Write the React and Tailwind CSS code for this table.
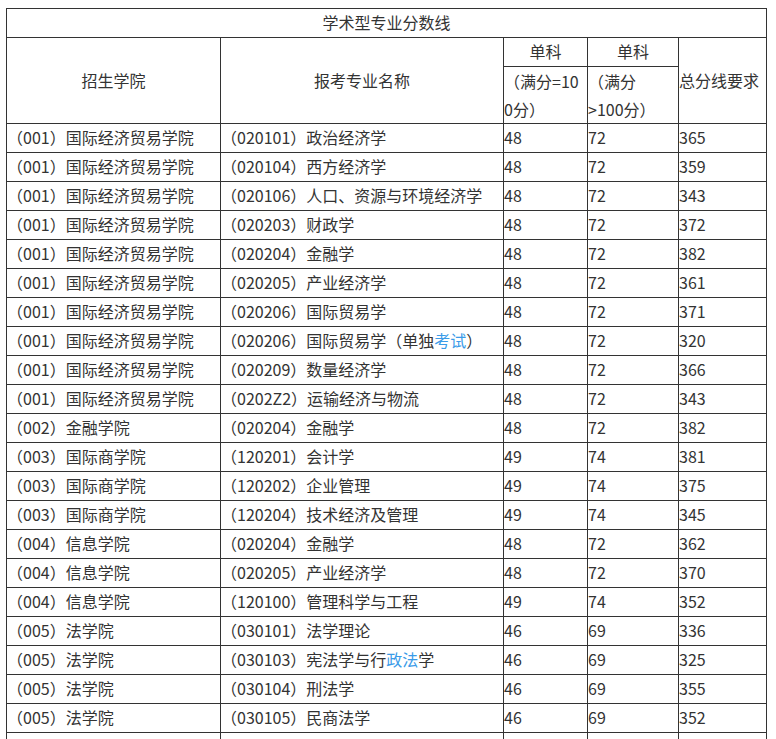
import React from 'react'

const rows = [
  ['（001）国际经济贸易学院', '（020101）政治经济学', '48', '72', '365'],
  ['（001）国际经济贸易学院', '（020104）西方经济学', '48', '72', '359'],
  ['（001）国际经济贸易学院', '（020106）人口、资源与环境经济学', '48', '72', '343'],
  ['（001）国际经济贸易学院', '（020203）财政学', '48', '72', '372'],
  ['（001）国际经济贸易学院', '（020204）金融学', '48', '72', '382'],
  ['（001）国际经济贸易学院', '（020205）产业经济学', '48', '72', '361'],
  ['（001）国际经济贸易学院', '（020206）国际贸易学', '48', '72', '371'],
  ['（001）国际经济贸易学院', 'exam', '48', '72', '320'],
  ['（001）国际经济贸易学院', '（020209）数量经济学', '48', '72', '366'],
  ['（001）国际经济贸易学院', '（0202Z2）运输经济与物流', '48', '72', '343'],
  ['（002）金融学院', '（020204）金融学', '48', '72', '382'],
  ['（003）国际商学院', '（120201）会计学', '49', '74', '381'],
  ['（003）国际商学院', '（120202）企业管理', '49', '74', '375'],
  ['（003）国际商学院', '（120204）技术经济及管理', '49', '74', '345'],
  ['（004）信息学院', '（020204）金融学', '48', '72', '362'],
  ['（004）信息学院', '（020205）产业经济学', '48', '72', '370'],
  ['（004）信息学院', '（120100）管理科学与工程', '49', '74', '352'],
  ['（005）法学院', '（030101）法学理论', '46', '69', '336'],
  ['（005）法学院', 'law', '46', '69', '325'],
  ['（005）法学院', '（030104）刑法学', '46', '69', '355'],
  ['（005）法学院', '（030105）民商法学', '46', '69', '352'],
]

function Major({ value }) {
  if (value === 'exam') {
    return <>（020206）国际贸易学（单独<span className="text-[#3a9be8]">考试</span>）</>
  }
  if (value === 'law') {
    return <>（030103）宪法学与行<span className="text-[#3a9be8]">政法</span>学</>
  }
  return value
}

export default function App() {
  const cell = 'border border-[#333] px-0 pt-0 pb-[2px] align-middle'
  const cell2 = 'border border-[#333] p-0 align-middle leading-[28px]'

  return (
    <div className="bg-white pt-[8px] pl-[6px] text-[16px] leading-[26px] text-[#333]" style={{ fontFamily: '"Noto Sans CJK SC", "Noto Sans", sans-serif' }}>
      <table className="table-fixed border-collapse w-[760px]">
        <colgroup>
          <col className="w-[214px]" />
          <col className="w-[283px]" />
          <col className="w-[84px]" />
          <col className="w-[91px]" />
          <col className="w-[88px]" />
        </colgroup>
        <tbody>
          <tr>
            <td colSpan={5} className={cell + ' text-center'}>学术型专业分数线</td>
          </tr>
          <tr>
            <td rowSpan={2} className={cell + ' text-center'}>招生学院</td>
            <td rowSpan={2} className={cell + ' text-center'}>报考专业名称</td>
            <td className={cell + ' text-center'}>单科</td>
            <td className={cell + ' text-center'}>单科</td>
            <td rowSpan={2} className={cell + ' whitespace-nowrap'}>总分线要求</td>
          </tr>
          <tr>
            <td className={cell2}>（满分=10<br />0分）</td>
            <td className={cell2}>（满分<br />&gt;100分）</td>
          </tr>
          {rows.map((r, i) => (
            <tr key={i}>
              <td className={cell + ' whitespace-nowrap'}>{r[0]}</td>
              <td className={cell + ' whitespace-nowrap'}><Major value={r[1]} /></td>
              <td className={cell}>{r[2]}</td>
              <td className={cell}>{r[3]}</td>
              <td className={cell}>{r[4]}</td>
            </tr>
          ))}
          <tr>
            <td className={cell}>&nbsp;</td>
            <td className={cell}>&nbsp;</td>
            <td className={cell}>&nbsp;</td>
            <td className={cell}>&nbsp;</td>
            <td className={cell}>&nbsp;</td>
          </tr>
        </tbody>
      </table>
    </div>
  )
}
